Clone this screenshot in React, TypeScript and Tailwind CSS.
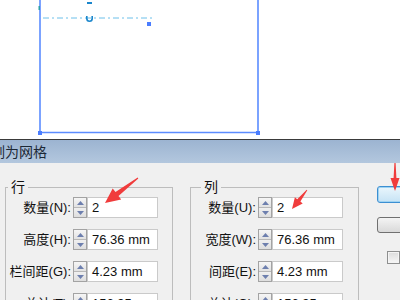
import React from "react";

const FONT = { fontFamily: '"Liberation Sans", "Noto Sans CJK SC", sans-serif' };

function Spinner() {
  return (
    <div className="flex h-[21px] w-[14px] flex-col border border-[#a3a3a3] bg-[#ececec]">
      <div className="flex flex-1 items-center justify-center border-b border-[#b8b8b8] bg-gradient-to-b from-[#f6f6f6] to-[#e2e2e2]">
        <svg width="7" height="4" viewBox="0 0 7 4">
          <polygon points="0,4 7,4 3.5,0" fill="#6d7fae" />
        </svg>
      </div>
      <div className="flex flex-1 items-center justify-center bg-gradient-to-b from-[#f0f0f0] to-[#dedede]">
        <svg width="7" height="4" viewBox="0 0 7 4">
          <polygon points="0,0 7,0 3.5,4" fill="#6d7fae" />
        </svg>
      </div>
    </div>
  );
}

function Row({ label, value }: { label: string; value: string }) {
  return (
    <div className="flex h-[21px] items-center">
      <div className="mr-[2px] w-[65px] whitespace-nowrap text-right text-[13px] leading-none text-[#111]">{label}</div>
      <Spinner />
      <div className="flex h-[21px] w-[71px] items-center overflow-hidden whitespace-nowrap border border-[#cacaca] bg-white pl-[4px] text-[13px] leading-none text-[#111]">
        {value}
      </div>
    </div>
  );
}

function Group({
  title,
  rows,
  width,
  legendLeft,
}: {
  title: string;
  rows: [string, string][];
  width: string;
  legendLeft: string;
}) {
  return (
    <div className={`relative h-[200px] border border-[#bdbdbd] ${width}`}>
      <span className={`absolute top-[-8px] bg-[#f0f0f0] px-[3px] text-[14px] leading-[14px] text-[#111] ${legendLeft}`}>
        {title}
      </span>
      <div className="flex flex-col gap-[11px] pt-[9px]">
        {rows.map(([l, v]) => (
          <Row key={l} label={l} value={v} />
        ))}
      </div>
    </div>
  );
}

export default function App() {
  return (
    <div className="relative h-[300px] w-[400px] overflow-hidden bg-white" style={FONT}>
      {/* canvas area */}
      <div className="h-[139px] bg-white">
        <svg width="400" height="139" viewBox="0 0 400 139">
          <line x1="40" y1="0" x2="40" y2="132.5" stroke="#5b8cff" strokeWidth="1.6" />
          <line x1="258" y1="0" x2="258" y2="132.5" stroke="#5b8cff" strokeWidth="1.6" />
          <line x1="40" y1="132.5" x2="258" y2="132.5" stroke="#5b8cff" strokeWidth="1.6" />
          <rect x="38" y="131" width="4" height="4" fill="#4a7dff" />
          <rect x="256" y="131" width="4" height="4" fill="#4a7dff" />
          <rect x="38.5" y="6" width="1.5" height="4" fill="#2aa0a8" />
          <line x1="43" y1="18" x2="153" y2="18" stroke="#6cc0ea" strokeWidth="1" strokeDasharray="6 3 2 3" />
          <rect x="87" y="2" width="5" height="2" fill="#1a86cc" />
          <path d="M86.8 16 v2.5 a2.7 2.7 0 0 0 5.4 0 v-2.5" fill="none" stroke="#1a86cc" strokeWidth="1.6" />
          <rect x="147" y="22" width="4" height="4" fill="#4a7dff" />
        </svg>
      </div>
      <div className="h-px bg-[#3a3a3a]" />
      {/* title bar */}
      <div className="flex h-[23px] items-center bg-gradient-to-b from-[#9cb4d1] to-[#b3c7de]">
        <span className="ml-[-23px] whitespace-nowrap text-[14px] leading-none text-[#1c2836]">分割为网格</span>
      </div>
      {/* body */}
      <div className="flex h-[137px] bg-[#f0f0f0] pt-[24px]">
        <div className="ml-[5px]">
          <Group
            title="行"
            width="w-[168px]"
            legendLeft="left-[2px]"
            rows={[
              ["数量(N):", "2"],
              ["高度(H):", "76.36 mm"],
              ["栏间距(G):", "4.23 mm"],
              ["总计(T):", "156.95 mm"],
            ]}
          />
        </div>
        <div className="ml-[17px]">
          <Group
            title="列"
            width="w-[169px]"
            legendLeft="left-[10px]"
            rows={[
              ["数量(U):", "2"],
              ["宽度(W):", "76.36 mm"],
              ["间距(E):", "4.23 mm"],
              ["总计(O):", "156.95 mm"],
            ]}
          />
        </div>
        <div className="ml-[18px] flex flex-col">
          <div className="mt-[-1px] h-[17px] w-[40px] rounded-[3px] border border-[#3c8fd2] bg-gradient-to-b from-[#eaf6fc] to-[#c6e3f5] shadow-[inset_0_0_0_1px_#9fd3f2]" />
          <div className="mt-[14px] h-[16px] w-[40px] rounded-[3px] border border-[#707070] bg-gradient-to-b from-[#f4f4f4] to-[#d9d9d9]" />
          <div className="ml-[10px] mt-[18px] h-[13px] w-[13px] border border-[#8e8f8f] bg-gradient-to-b from-[#dcdcdc] to-[#f7f7f7] shadow-[inset_0_0_0_1px_#f4f4f4]" />
        </div>
      </div>
      {/* red annotation arrows */}
      <svg className="pointer-events-none absolute left-0 top-0" width="400" height="300" viewBox="0 0 400 300">
        <polygon
          points="138.3,178.4 118.5,195.9 121.2,199.5 105,203 112.7,188.4 115.5,192 137.7,177.6"
          fill="#f03c3c"
        />
        <polygon
          points="307.3,190.2 300.4,201.6 302.7,203.5 292,209 294.9,197.3 297.2,199.2 306.7,189.8"
          fill="#f03c3c"
        />
        <polygon
          points="394.4,163 395.6,163 396.4,178 399.5,178 395,191 390.5,178 393.6,178"
          fill="#f03c3c"
        />
      </svg>
    </div>
  );
}
